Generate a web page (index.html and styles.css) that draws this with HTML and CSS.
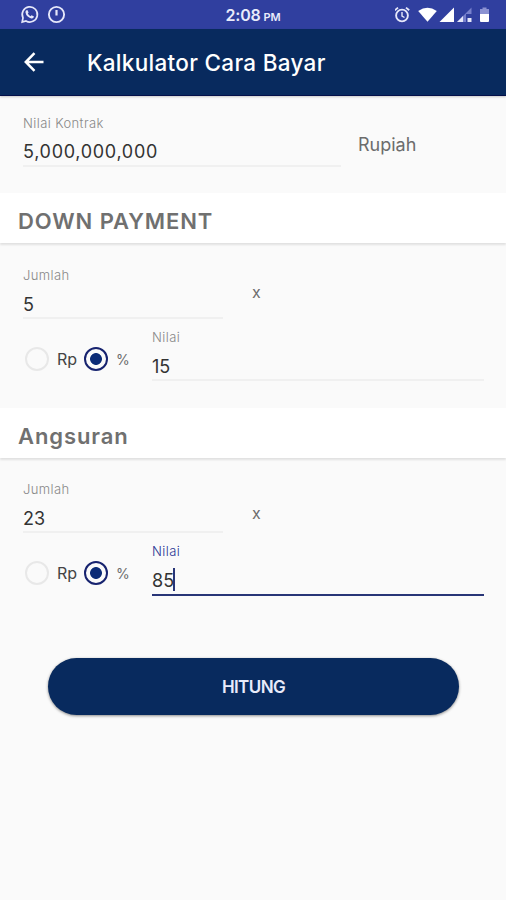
FILE: index.html
```html
<!DOCTYPE html>
<html lang="id">
<head>
<meta charset="UTF-8">
<meta name="viewport" content="width=device-width, initial-scale=1.0">
<title>Kalkulator Cara Bayar</title>
<link rel="stylesheet" href="styles.css">
</head>
<body>
    <div class="status-bar">
        <div class="status-left">
            <svg width="19" height="19" viewBox="0 0 19 19" fill="none" stroke="#e6e8fa">
                <path d="M2.2 17 L3 12.8 A7.6 7.6 0 1 1 6 16 Z" stroke-width="1.7"/>
                <path d="M6 5.6 L7.4 5 L8.6 7.4 L7.8 8.6 Q8.6 10.4 10.4 11.2 L11.6 10.3 L14 11.6 Q13.4 13.8 11.3 13.4 Q6.4 12.2 5.5 7.5 Q5.4 6.4 6 5.6 Z" fill="#e6e8fa" stroke="none"/>
            </svg>
            <svg width="19" height="19" viewBox="0 0 19 19" fill="none" stroke="#e6e8fa">
                <circle cx="9.5" cy="9.5" r="7.6" stroke-width="1.9"/>
                <path d="M9.5 5 V10.5" stroke-width="2.2"/>
            </svg>
        </div>
        <div class="clock"><span>2:08</span><small>PM</small></div>
        <div class="status-right">
            <svg width="98" height="18" viewBox="0 0 98 18">
                <g fill="none" stroke="#e6e8fa">
                    <circle cx="7" cy="9.5" r="5.9" stroke-width="1.9"/>
                    <path d="M7 6 V10 L9.5 11.5" stroke-width="1.4"/>
                    <path d="M-0.2 4.3 L3 1.6 M14.2 4.3 L11 1.6" stroke-width="1.8"/>
                </g>
                <path d="M23.2 5 Q32.5 -1.5 41.8 5 L32.5 15.8 Z" fill="#fff"/>
                <path d="M44.5 16 L59 1.5 V16 Z" fill="#fff"/>
                <path d="M62 16 L76.5 1.5 V8 H71 V16 Z" fill="#7780cc"/>
                <path d="M62 16 L68 10 V16 Z M72.5 12 h4 v4 h-4 Z" fill="#e6e8fa"/>
                <path d="M87.5 1.5 h4 v1.5 h2.5 v5 h-9 v-5 h2.5 Z" fill="#8b92d2"/>
                <path d="M85 8 h9 v7 q0 1 -1 1 h-7 q-1 0 -1 -1 Z" fill="#fff"/>
            </svg>
        </div>
    </div>

    <div class="app-bar">
        <svg class="back" width="20" height="20" viewBox="0 0 20 20" fill="none" stroke="#fff" stroke-width="2.5">
            <path d="M19.5 10 H2 M10.5 1.2 L1.8 10 L10.5 18.8"/>
        </svg>
        <h1>Kalkulator Cara Bayar</h1>
    </div>

    <div class="section contract">
        <div class="field wide">
            <label for="kontrak">Nilai Kontrak</label>
            <input type="text" id="kontrak" value="5,000,000,000">
        </div>
        <span class="currency">Rupiah</span>
    </div>

    <h2>DOWN PAYMENT</h2>
    <div class="section">
        <div class="row">
            <div class="field count">
                <label for="dp-jumlah">Jumlah</label>
                <input type="text" id="dp-jumlah" value="5">
            </div>
            <span class="times">x</span>
        </div>
        <div class="row">
            <div class="options">
                <label><input type="radio" name="dp"><span class="rp">Rp</span></label>
                <label><input type="radio" name="dp" checked><span class="pct">%</span></label>
            </div>
            <div class="field">
                <label for="dp-nilai">Nilai</label>
                <input type="text" id="dp-nilai" value="15">
            </div>
        </div>
    </div>

    <h2>Angsuran</h2>
    <div class="section angsuran">
        <div class="row">
            <div class="field count">
                <label for="a-jumlah">Jumlah</label>
                <input type="text" id="a-jumlah" value="23">
            </div>
            <span class="times low">x</span>
        </div>
        <div class="row">
            <div class="options">
                <label><input type="radio" name="angsuran"><span class="rp">Rp</span></label>
                <label><input type="radio" name="angsuran" checked><span class="pct">%</span></label>
            </div>
            <div class="field active">
                <label for="a-nilai">Nilai</label>
                <input type="text" id="a-nilai" value="85">
                <i class="caret"></i>
            </div>
        </div>
    </div>

    <button class="submit">HITUNG</button>
</body>
</html>
```
FILE: styles.css
```css
*{
    box-sizing: border-box;
}
body{
    margin: 0;
    min-height: 900px;
    background: #fafafa;
    font-family: Inter, "Liberation Sans", sans-serif;
    color: #6c6c6c;
}
svg{
    display: block;
}

/* status bar */
.status-bar{
    display: grid;
    grid-template-columns: 1fr auto 1fr;
    align-items: center;
    height: 29px;
    padding: 0 13px 0 20px;
    background: #303f9f;
}
.status-left{
    display: flex;
    gap: 8px;
}
.status-right{
    justify-self: end;
}
.clock{
    display: flex;
    align-items: baseline;
    gap: 3px;
    margin-right: 7px;
    color: #e9ebfb;
    font-size: 16px;
    font-weight: 600;
    letter-spacing: -.2px;
    padding-top: 1px;
}
.clock small{
    font-size: 11px;
}

.app-bar{
    display: flex;
    align-items: center;
    height: 67px;
    padding-left: 24px;
    background: #082a5e;
    border-bottom: 1px solid #04104a;
    box-shadow: 0 1px 2px rgba(0,0,0,.2);
}
.app-bar h1{
    margin: 0 0 0 43px;
    font-size: 22.5px;
    font-weight: 500;
    letter-spacing: .3px;
    color: #fff;
}

/* sections */
h2{
    margin: 0;
    height: 50px;
    padding: 3px 18px 0;
    line-height: 50px;
    background: #fff;
    box-shadow: 0 2px 2px rgba(0,0,0,.1);
    font-size: 22px;
    font-weight: 600;
    letter-spacing: .9px;
    color: #707070;
}
.section{
    height: 165px;
    padding: 23px 22px 0 23px;
}
.contract{
    display: flex;
    height: 97px;
    padding-top: 18px;
}
.angsuran{
    padding-top: 22px;
}
.row{
    display: flex;
    margin-bottom: 9px;
}

/* fields */
.field{
    position: relative;
    flex: 1;
}
.field label{
    display: block;
    height: 18px;
    line-height: 18px;
    font-size: 13px;
    font-weight: 300;
    letter-spacing: .4px;
    color: #888;
}
.field input{
    display: block;
    width: 100%;
    height: 28px;
    margin-top: 7px;
    padding: 0;
    border: 0;
    border-bottom: 2px solid #f0f0f0;
    background: none;
    outline: none;
    font: 400 18px Inter, "Liberation Sans", sans-serif;
    color: #333;
}
.wide{
    flex: 0 0 318px;
}
.wide input{
    padding-bottom: 1px;
    letter-spacing: .7px;
}
.count{
    flex: 0 0 200px;
}
.field.active label{
    color: #283593;
}
.active input{
    height: 29px;
    padding-bottom: 1px;
    border-color: #283577;
}
.caret{
    position: absolute;
    left: 21px;
    top: 26px;
    width: 2px;
    height: 23px;
    background: #283577;
}
.currency{
    margin: 19px 0 0 17px;
    font-size: 18px;
    line-height: 24px;
}
.times{
    margin: 14px 0 0 29px;
    font-size: 16px;
    line-height: 24px;
}
.times.low{
    margin-top: 21px;
}

/* radio buttons */
.options{
    display: flex;
    width: 129px;
    height: 24px;
    margin: 19px 0 0;
    padding-left: 2px;
}
.options label{
    display: flex;
    align-items: center;
}
.options input{
    appearance: none;
    width: 24px;
    height: 24px;
    margin: 0 8px 0 0;
    border: 2px solid #e8e8e8;
    border-radius: 50%;
}
.options input:checked{
    border-color: #17236f;
    background: radial-gradient(circle, #0b2b76 5.5px, transparent 6.3px);
}
.rp{
    width: 27px;
    font-size: 16px;
    color: #444;
}
.pct{
    font-size: 14px;
}

.submit{
    display: block;
    width: 411px;
    height: 57px;
    margin: 35px 0 0 48px;
    padding: 0;
    border: 0;
    border-radius: 29px;
    background: #082a5e;
    box-shadow: 0 1px 3px rgba(0,0,0,.45);
    font: 600 17px Inter, "Liberation Sans", sans-serif;
    letter-spacing: -.6px;
    color: #e8ebfa;
}
```
